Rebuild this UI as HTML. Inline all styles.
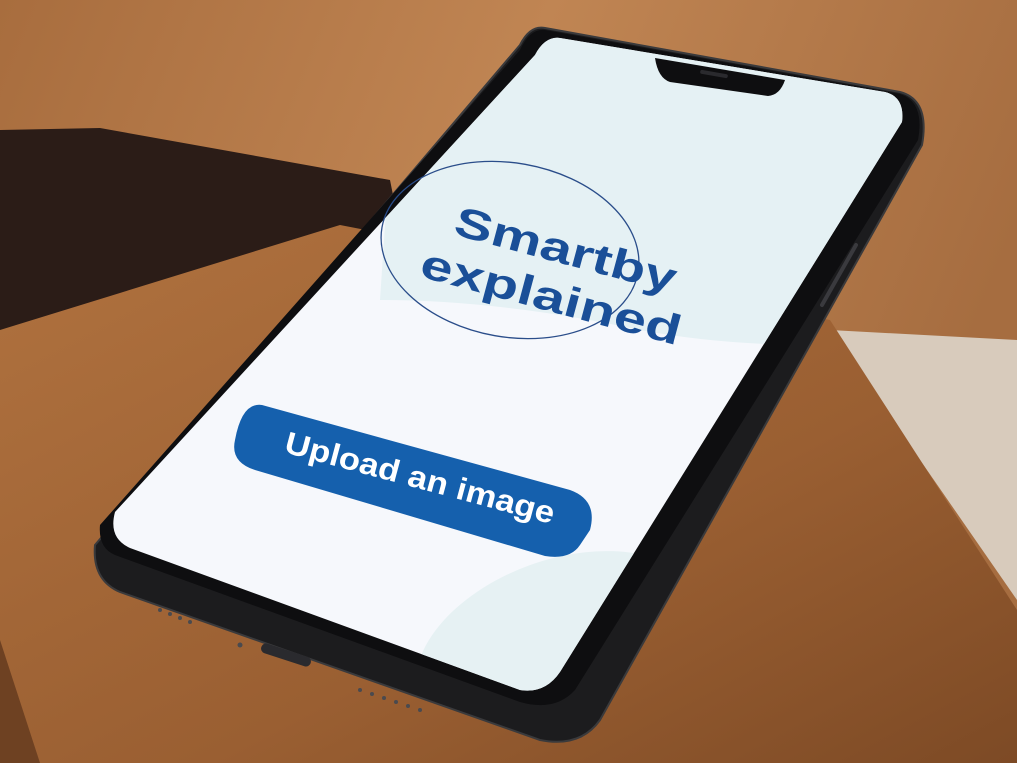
<!DOCTYPE html>
<html><head><meta charset="utf-8"><style>
html,body{margin:0;padding:0;width:1017px;height:763px;overflow:hidden;background:#b47a48}
svg{display:block}
</style></head><body>
<svg width="1017" height="763" viewBox="0 0 1017 763" xmlns="http://www.w3.org/2000/svg">
<defs>
<linearGradient id="wood" x1="0" y1="0" x2="1" y2="0.3">
<stop offset="0" stop-color="#a86d3e"/><stop offset="0.5" stop-color="#c08553"/><stop offset="1" stop-color="#a66d40"/></linearGradient>
<linearGradient id="book" x1="0" y1="0" x2="1" y2="1">
<stop offset="0" stop-color="#b0723f"/><stop offset="0.6" stop-color="#9a5f32"/><stop offset="1" stop-color="#7d4a25"/></linearGradient>
<clipPath id="sc"><path d="M560,38 L885,92 Q905,97 902,122 L560,672 Q545,694 520,690 L130,548 Q108,538 115,512 L535,55 Q545,36 560,38 Z"/></clipPath>
</defs>
<rect width="1017" height="763" fill="url(#wood)"/>
<polygon points="0,130 100,128 390,180 420,330 0,330" fill="#2b1c17"/>
<polygon points="830,330 1017,340 1017,600" fill="#d8cbbc"/>
<polygon points="0,330 340,225 830,320 1017,610 1017,763 0,763" fill="url(#book)"/>
<polygon points="0,640 40,763 0,763" fill="#6e4122"/>
<path d="M545,28 L900,92 Q930,100 922,145 L600,720 Q580,748 540,740 L120,592 Q92,580 95,545 L520,45 Q530,25 545,28 Z" fill="#1c1c1e" stroke="#3a3a3c" stroke-width="2"/>
<path d="M545,30 L900,94 Q925,102 918,140 L575,690 Q555,712 520,702 L115,555 Q98,548 100,525 L520,50 Q530,28 545,30 Z" fill="#0e0e10"/>
<g clip-path="url(#sc)">
<rect width="1017" height="763" fill="#f6f8fc"/>
<path d="M400,0 L1017,0 L1017,330 Q800,360 640,330 Q500,300 380,300 Z" fill="#e5f1f4"/>
<ellipse cx="560" cy="650" rx="150" ry="90" fill="#e6f1f3" transform="rotate(-20 560 650)"/>
</g>
<path d="M655,58 L785,80 Q780,95 768,96 L670,82 Q658,78 655,58 Z" fill="#0e0e10"/>
<rect x="700" y="72" width="28" height="4" rx="2" fill="#2a2a2e" transform="rotate(10 714 74)"/>
<ellipse cx="510" cy="250" rx="130" ry="87" fill="none" stroke="#2a4d8a" stroke-width="1.3" transform="rotate(10 510 250)"/>
<g font-family="Liberation Sans, sans-serif" font-weight="bold" fill="#1a4f98">
<text x="452" y="234" font-size="42" textLength="228" lengthAdjust="spacingAndGlyphs" transform="rotate(15 452 234)">Smartby</text>
<text x="418" y="276" font-size="42" textLength="268" lengthAdjust="spacingAndGlyphs" transform="rotate(15 418 276)">explained</text>
</g>
<path d="M262,405 L570,490 Q598,500 590,530 L580,545 Q570,560 545,556 L255,470 Q230,462 235,440 Q242,402 262,405 Z" fill="#1560ad"/>
<text x="283" y="452" font-family="Liberation Sans, sans-serif" font-weight="bold" font-size="31" fill="#ffffff" textLength="278" lengthAdjust="spacingAndGlyphs" transform="rotate(15 283 452)">Upload an image</text>
<path d="M856,245 L822,305" stroke="#3a3a3e" stroke-width="4" stroke-linecap="round"/>
<g fill="#4a4a4e">
<circle cx="160" cy="610" r="2"/><circle cx="170" cy="614" r="2"/><circle cx="180" cy="618" r="2"/><circle cx="190" cy="622" r="2"/>
<circle cx="360" cy="690" r="2"/><circle cx="372" cy="694" r="2"/><circle cx="384" cy="698" r="2"/><circle cx="396" cy="702" r="2"/><circle cx="408" cy="706" r="2"/><circle cx="420" cy="710" r="2"/>
<circle cx="240" cy="645" r="2.5"/>
</g>
<rect x="260" y="650" width="52" height="10" rx="5" fill="#2a2a2e" transform="rotate(18 286 655)"/>
</svg>
</body></html>
